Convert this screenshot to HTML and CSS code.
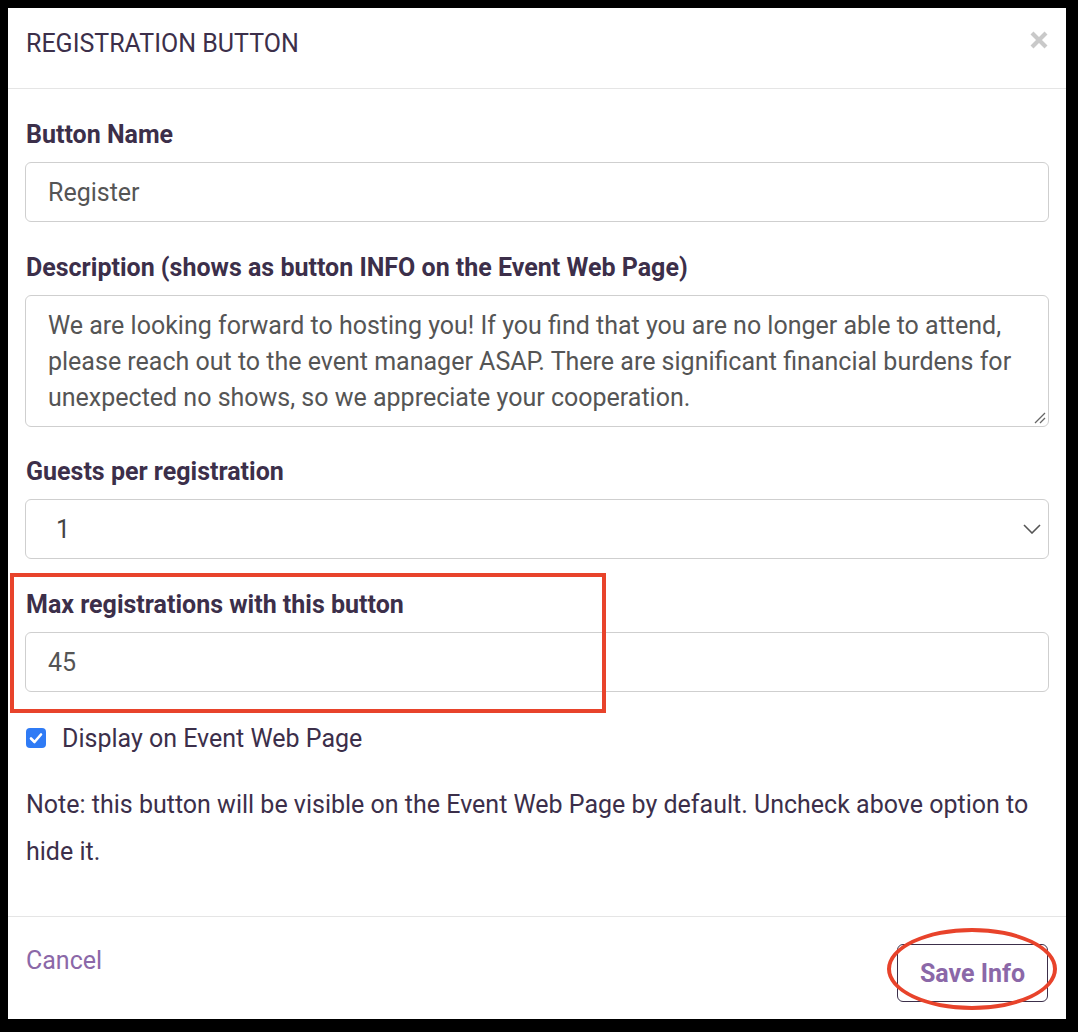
FILE: index.html
```html
<!DOCTYPE html>
<html>
<head>
<meta charset="utf-8">
<link rel="stylesheet" href="styles.css">
</head>
<body>
<div class="modal">
  <div class="modal-header">
    <div class="modal-title">REGISTRATION BUTTON</div>
    <svg class="close" width="18" height="18" viewBox="0 0 18 18"><path d="M2 2 L16 16 M16 2 L2 16" stroke="#c9c9c9" stroke-width="4.2" stroke-linecap="butt"/></svg>
  </div>
  <div class="modal-body">
    <div class="group g1">
      <div class="label">Button Name</div>
      <div class="field">Register</div>
    </div>
    <div class="group g2">
      <div class="label">Description (shows as button INFO on the Event Web Page)</div>
      <div class="field area">
        <div>We are looking forward to hosting you! If you find that you are no longer able to attend,</div>
        <div>please reach out to the event manager ASAP. There are significant financial burdens for</div>
        <div>unexpected no shows, so we appreciate your cooperation.</div>
        <svg class="grip" width="14" height="14" viewBox="0 0 14 14"><path d="M13 3 L3 13 M13 8 L8 13" stroke="#666" stroke-width="1.3"/></svg>
      </div>
    </div>
    <div class="group g3">
      <div class="label">Guests per registration</div>
      <div class="field select"><span class="sel-val">1</span><svg width="18" height="10" viewBox="0 0 18 10"><path d="M1 1 L9 9 L17 1" fill="none" stroke="#555" stroke-width="1.6"/></svg></div>
    </div>
    <div class="group g4">
      <div class="label">Max registrations with this button</div>
      <div class="field">45</div>
      <div class="red-box"></div>
    </div>
    <div class="check-row">
      <span class="checkbox"><svg width="20" height="20" viewBox="0 0 20 20"><path d="M5 10.5 L8.5 14 L15 6.5" fill="none" stroke="#fff" stroke-width="2.6" stroke-linecap="round" stroke-linejoin="round"/></svg></span>
      <span class="check-label">Display on Event Web Page</span>
    </div>
    <p class="note">Note: this button will be visible on the Event Web Page by default. Uncheck above option to hide it.</p>
  </div>
  <div class="modal-footer">
    <span class="cancel">Cancel</span>
    <div class="save-wrap">
      <button class="save">Save Info</button>
      <div class="red-ellipse"></div>
    </div>
  </div>
</div>
</body>
</html>
```
FILE: styles.css
```css
* { box-sizing: border-box; }
html, body { margin: 0; padding: 0; background: #000; }
body {
  font-family: Roboto, "Liberation Sans", Arial, sans-serif;
  color: #3c2f4a;
  width: 1078px;
  height: 1032px;
  overflow: hidden;
}
.modal {
  margin: 8px 12px 0 8px;
  width: 1058px;
  height: 1011px;
  background: #fff;
  display: flex;
  flex-direction: column;
}
.modal-header {
  height: 81px;
  flex: none;
  border-bottom: 1px solid #e5e5e5;
  padding: 21px 18px 0 18px;
  display: flex;
  justify-content: space-between;
  align-items: flex-start;
}
.modal-title {
  font-size: 25px;
  line-height: 30px;
  font-weight: 400;
  color: #3c2f4a;
}
.close { margin-top: 2px; }
.modal-body {
  flex: 1;
  padding: 30px 17px 0 17px;
}
.group { position: relative; }
.g1, .g3 { margin-bottom: 30px; }
.g2 { margin-bottom: 29px; }
.g4 { margin-bottom: 31px; }
.label {
  font-size: 25px;
  line-height: 30px;
  font-weight: 700;
  padding-top: 1px;
  margin-bottom: 12px;
  padding-left: 1px;
  color: #3c2f4a;
}
.field {
  height: 60px;
  border: 1px solid #cfcfcf;
  border-radius: 6px;
  font-size: 25px;
  color: #555;
  padding: 0 22px;
  display: flex;
  align-items: center;
}
.field.area {
  height: 132px;
  display: block;
  padding: 12px 22px 0 22px;
  line-height: 36px;
  position: relative;
  white-space: nowrap;
}
.grip { position: absolute; right: 2px; bottom: 2px; }
.field.select { justify-content: space-between; padding: 0 7px 0 30px; }
.sel-val { color: #444; }
.red-box {
  position: absolute;
  left: -15px;
  top: -16px;
  width: 596px;
  height: 140px;
  border: 4px solid #e8432b;
}
.check-row {
  display: flex;
  align-items: center;
  height: 30px;
  gap: 16px;
  padding-left: 1px;
}
.checkbox {
  width: 20px;
  height: 20px;
  border-radius: 4px;
  background: #2f7bf5;
  display: inline-flex;
}
.check-label { font-size: 25px; color: #3c2f4a; }
.note {
  margin: 28px 0 0 1px;
  font-size: 25px;
  line-height: 47px;
  color: #3c2f4a;
}
.modal-footer {
  height: 103px;
  flex: none;
  border-top: 1px solid #e5e5e5;
  padding: 27px 18px 0 18px;
  display: flex;
  justify-content: space-between;
  align-items: flex-start;
}
.cancel {
  font-size: 25px;
  line-height: 30px;
  padding-top: 2px;
  color: #8b68a8;
}
.save-wrap { position: relative; }
.save {
  width: 151px;
  height: 58px;
  border: 1px solid #3c2f4a;
  border-radius: 6px;
  background: #fff;
  font-family: Roboto, "Liberation Sans", Arial, sans-serif;
  font-size: 25px;
  font-weight: 700;
  color: #8b68a8;
  padding: 0;
}
.red-ellipse {
  position: absolute;
  left: -10px;
  top: -16px;
  width: 170px;
  height: 82px;
  border: 4px solid #e8432b;
  border-radius: 50%;
}
```
